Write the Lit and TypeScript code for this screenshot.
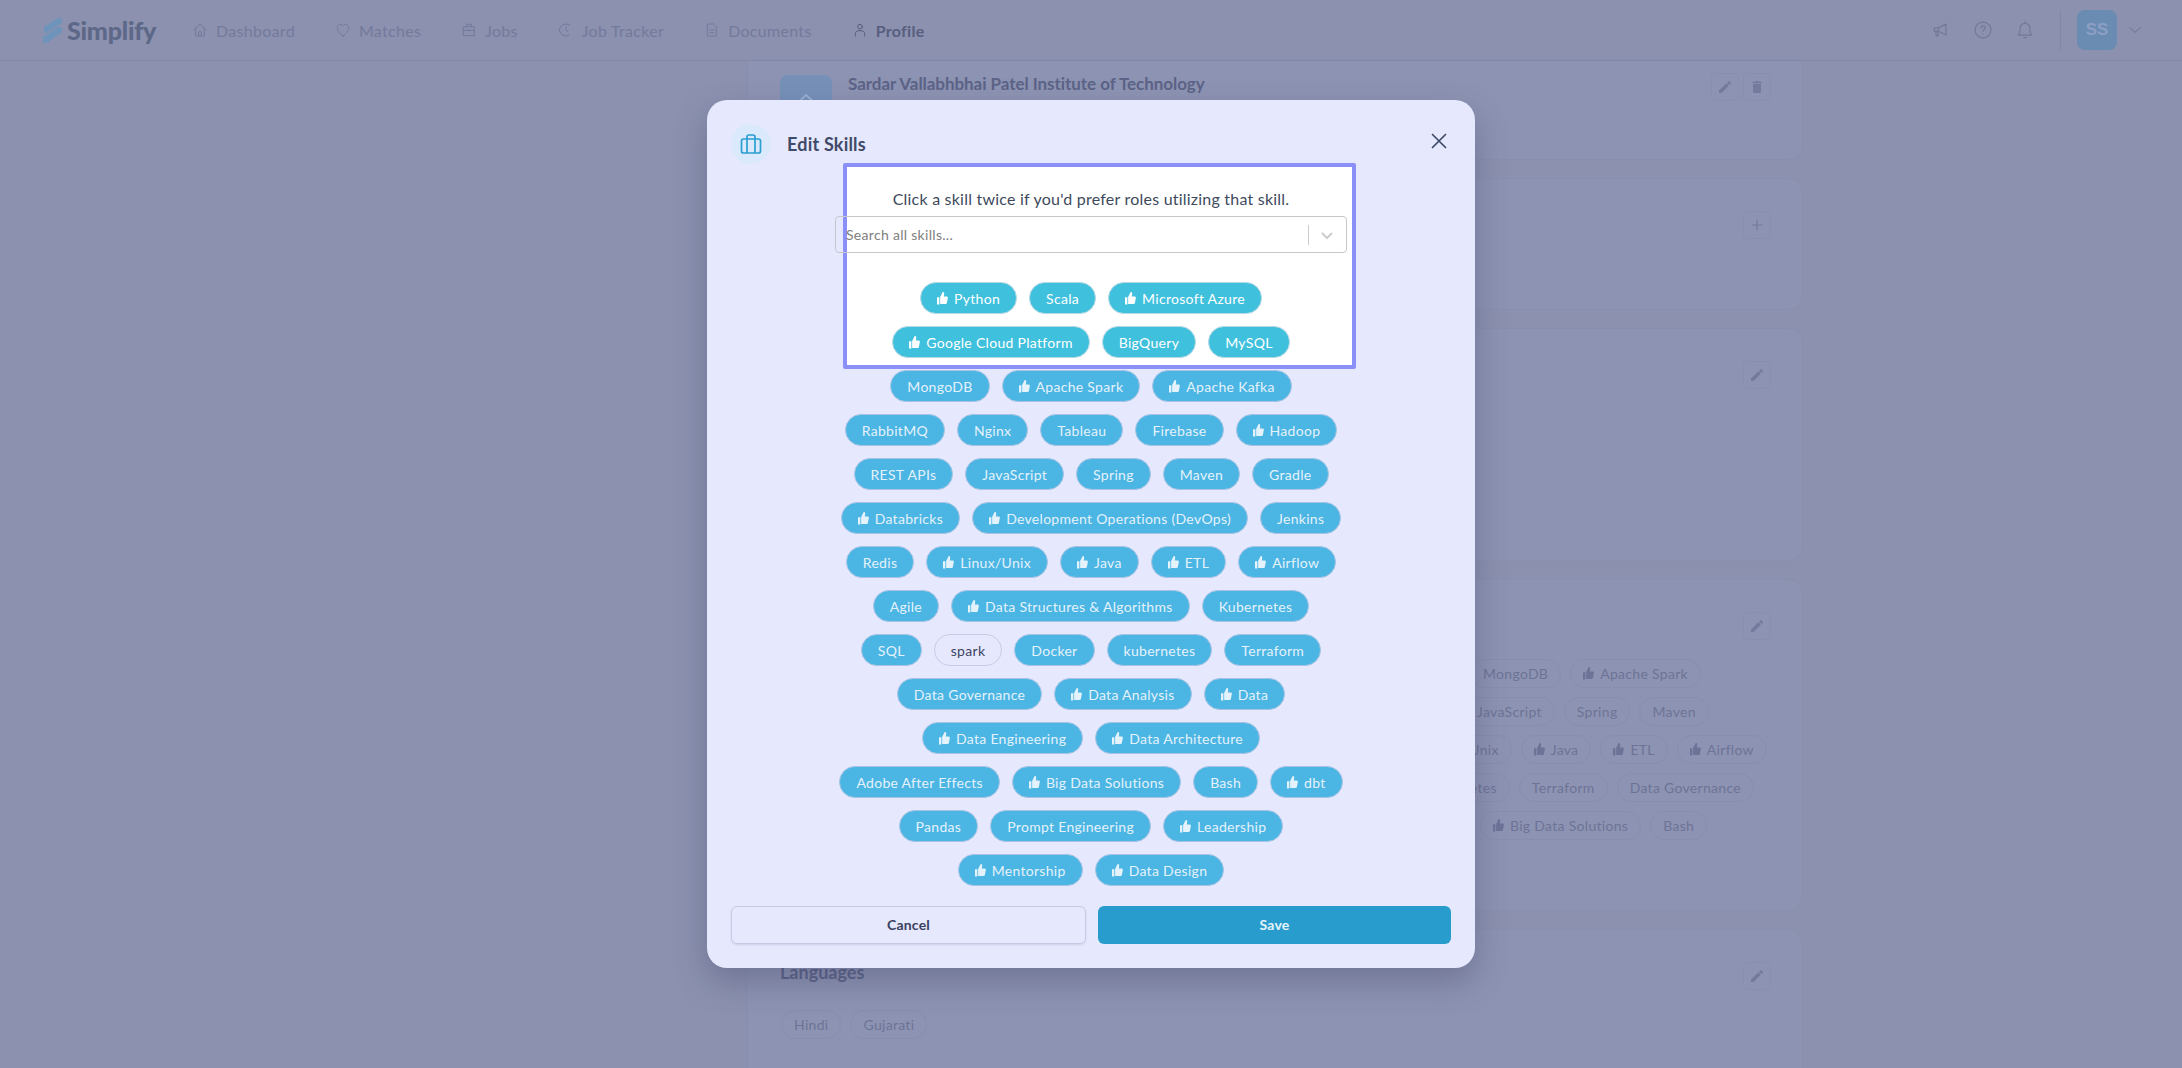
import { LitElement, html, css, svg } from 'lit';
import { customElement } from 'lit/decorators.js';

// "+" means the skill is preferred (thumb icon), "~" means not selected
const SPOT_ROWS = [
  ['+Python', 'Scala', '+Microsoft Azure'],
  ['+Google Cloud Platform', 'BigQuery', 'MySQL'],
];
const ROWS = [
  ['MongoDB', '+Apache Spark', '+Apache Kafka'],
  ['RabbitMQ', 'Nginx', 'Tableau', 'Firebase', '+Hadoop'],
  ['REST APIs', 'JavaScript', 'Spring', 'Maven', 'Gradle'],
  ['+Databricks', '+Development Operations (DevOps)', 'Jenkins'],
  ['Redis', '+Linux/Unix', '+Java', '+ETL', '+Airflow'],
  ['Agile', '+Data Structures & Algorithms', 'Kubernetes'],
  ['SQL', '~spark', 'Docker', 'kubernetes', 'Terraform'],
  ['Data Governance', '+Data Analysis', '+Data'],
  ['+Data Engineering', '+Data Architecture'],
  ['Adobe After Effects', '+Big Data Solutions', 'Bash', '+dbt'],
  ['Pandas', 'Prompt Engineering', '+Leadership'],
  ['+Mentorship', '+Data Design'],
];
// only the ends of these rows show beside the modal
const BG_ROWS = [
  { left: 689, skills: ['MongoDB', '+Apache Spark'] },
  { left: 683, skills: ['JavaScript', 'Spring', 'Maven'] },
  { left: 634, skills: ['Linux/Unix', '+Java', '+ETL', '+Airflow'] },
  { left: 631, skills: ['kubernetes', 'Terraform', 'Data Governance'] },
  { left: 699, skills: ['+Big Data Solutions', 'Bash'] },
];

const thumb = html`<svg class="thumb" viewBox="2 1 21 22" preserveAspectRatio="none" fill="currentColor">
  <path d="M2 10h4.500v12H2zM8 21.500V9.600l4.600-8.100c.3-.5 1-.7 1.600-.4 1.200.6 1.800 1.900 1.500 3.200L15 8.500h5.500c1.500 0 2.500 1.300 2.200 2.700l-1.800 8.500c-.3 1.100-1.200 1.800-2.300 1.800H9.500c-.8 0-1.500-.2-1.500-.5z" />
</svg>`;

const icon = (body: unknown, cls = 'nav-icon') => html`<svg
  class=${cls}
  viewBox="0 0 24 24"
  fill="none"
  stroke="currentColor"
  stroke-width="1.5"
  stroke-linecap="round"
  stroke-linejoin="round"
>${body}</svg>`;

const NAV = [
  { label: 'Dashboard', d: svg`<path d="M3 11.500 12 3l9 8.500M5.500 9.500V21h13V9.500M10 21v-6.500h4V21" />` },
  { label: 'Matches', d: svg`<path d="M12 21C6 16 3.500 12.500 3.500 8.500 3.500 5.500 5.800 3.500 8.300 3.500c1.600 0 2.900.8 3.700 2.200.8-1.400 2.100-2.200 3.700-2.200 2.500 0 4.800 2 4.800 5 0 4-2.500 7.500-8.500 12.500z" />` },
  { label: 'Jobs', d: svg`<path d="M4 7h16v13.500H4zM8.500 7V3.500h7V7M4 12.500h16M12 11.500v2" />` },
  { label: 'Job Tracker', d: svg`<path d="M16.500 4.500A9 9 0 1 0 16.500 19.500M12 7v5.500l3 2M16.500 4.500l1.500-1.500" />` },
  { label: 'Documents', d: svg`<path d="M5.500 3h9l4 4v14h-13zM9 12h6M9 16h6" />` },
];

@customElement('app-root')
export class AppRoot extends LitElement {
  static styles = css`
    :host {
      display: block;
      position: relative;
      width: 2182px;
      height: 1068px;
      overflow: hidden;
      background: #8b91af;
      font-family: Lato, 'Noto Sans', sans-serif;
      color: #6d7397;
    }
    .nav {
      display: flex;
      align-items: center;
      height: 60px;
      padding-left: 43px;
      border-bottom: 1px solid #8187a8;
    }
    .logo {
      display: flex;
      align-items: center;
      gap: 5px;
      width: 149px;
      font-size: 25px;
      font-weight: 900;
      color: #5d6787;
      letter-spacing: -0.2px;
    }
    .logo svg {
      width: 19px;
      height: 25px;
    }
    .links {
      display: flex;
      align-items: center;
      gap: 40px;
    }
    .link {
      display: flex;
      align-items: center;
      gap: 8px;
      font-size: 16px;
      color: #747a9c;
      letter-spacing: 0.3px;
    }
    .link.active {
      color: #585e7e;
      font-weight: 700;
    }
    .nav-icon {
      width: 16px;
      height: 16px;
    }
    .nav-right {
      margin-left: auto;
      display: flex;
      align-items: center;
      color: #737998;
    }
    .nav-right .tool {
      width: 20px;
      height: 20px;
      margin-right: 22px;
    }
    .sep {
      width: 1px;
      height: 40px;
      margin: 0 16px 0 3px;
      background: #8187a8;
    }
    .avatar {
      display: flex;
      align-items: center;
      justify-content: center;
      width: 40px;
      height: 40px;
      border-radius: 8px;
      background: #6a8bb2;
      color: #8d9fc3;
      font-size: 17px;
      font-weight: 700;
      font-family: 'Liberation Sans', sans-serif;
    }
    .caret {
      width: 16px;
      height: 16px;
      margin: 0 39px 0 10px;
      color: #6b7192;
    }
    .main {
      display: flex;
      flex-direction: column;
      gap: 18px;
      margin-left: 747px;
      width: 1056px;
    }
    .card {
      position: relative;
      box-sizing: border-box;
      padding: 32px 31px 0 33px;
      background: #8d93b2;
      border: 1px solid #8990ae;
      border-radius: 14px;
    }
    .card.first {
      height: 99px;
      padding-top: 12px;
      border-top: none;
      border-radius: 0 0 14px 14px;
    }
    .card.second {
      height: 132px;
    }
    .card.third {
      height: 233px;
    }
    .card.skills {
      height: 332px;
    }
    .card.last {
      height: 160px;
    }
    .actions {
      display: flex;
      justify-content: flex-end;
      gap: 4px;
    }
    .act {
      display: flex;
      align-items: center;
      justify-content: center;
      width: 28px;
      height: 28px;
      box-sizing: border-box;
      border: 1px solid #8990ae;
      border-radius: 5px;
      color: #747a9c;
    }
    .act svg {
      width: 16px;
      height: 16px;
    }
    .school {
      position: absolute;
      left: 32px;
      top: 11px;
      display: flex;
      gap: 16px;
    }
    .tile {
      display: flex;
      align-items: flex-end;
      justify-content: center;
      width: 52px;
      height: 52px;
      margin-top: 3px;
      border-radius: 8px;
      background: #7690b8;
      color: #9aaed0;
    }
    .tile svg {
      width: 30px;
      height: 30px;
      margin-bottom: 6px;
    }
    .school-name {
      font-size: 17px;
      font-weight: 700;
      color: #5c6387;
      line-height: 24px;
      letter-spacing: -0.05px;
    }
    .bg-rows {
      display: flex;
      flex-direction: column;
      gap: 9px;
      margin-top: 19px;
    }
    .bg-row {
      display: flex;
      gap: 9px;
    }
    .bg-chip {
      display: flex;
      align-items: center;
      gap: 6px;
      box-sizing: border-box;
      height: 29px;
      padding: 0 12px;
      border: 1px solid #888eac;
      border-radius: 15px;
      font-size: 14px;
      white-space: nowrap;
      letter-spacing: 0.3px;
    }
    .lang-title {
      position: absolute;
      left: 32px;
      top: 31px;
      font-size: 18px;
      font-weight: 700;
      color: #5c6387;
    }
    .langs {
      display: flex;
      gap: 9px;
      margin-top: 20px;
    }
    .modal {
      position: absolute;
      left: 707px;
      top: 100px;
      box-sizing: border-box;
      width: 768px;
      height: 868px;
      padding: 24px;
      display: flex;
      flex-direction: column;
      background: #e6e8fd;
      border-radius: 20px;
      box-shadow: 0 14px 32px rgba(60, 64, 100, 0.35);
    }
    .spot {
      position: absolute;
      left: 136px;
      top: 63px;
      box-sizing: border-box;
      width: 513px;
      height: 206px;
      background: #fff;
      border: 4px solid #8b90f8;
      border-radius: 2px;
    }
    .modal-head {
      position: relative;
      display: flex;
      align-items: center;
      gap: 16px;
      height: 40px;
    }
    .badge {
      display: flex;
      align-items: center;
      justify-content: center;
      width: 40px;
      height: 40px;
      border-radius: 50%;
      background: #dbe9fd;
      color: #2a9fd0;
    }
    .badge svg {
      width: 24px;
      height: 24px;
    }
    .modal-title {
      font-size: 18px;
      font-weight: 700;
      color: #3f4a68;
      letter-spacing: 0.2px;
    }
    .close {
      width: 20px;
      height: 20px;
      margin: -6px 2px 0 auto;
      color: #3f4a68;
    }
    .hint {
      position: relative;
      margin-top: 23px;
      height: 24px;
      line-height: 24px;
      text-align: center;
      font-size: 16px;
      color: #3e4a5c;
      letter-spacing: 0.22px;
    }
    .select {
      position: relative;
      display: flex;
      align-items: center;
      box-sizing: border-box;
      width: 512px;
      height: 37px;
      margin: 5px 0 0 104px;
      padding-left: 10px;
      border: 1px solid #c8c8cc;
      border-radius: 4px;
      font-size: 14px;
      letter-spacing: 0.3px;
      color: #808080;
    }
    .select .bar {
      width: 1px;
      height: 20px;
      margin-left: auto;
      background: #cccccc;
    }
    .select svg {
      width: 20px;
      height: 20px;
      margin: 0 9px 0 8px;
      color: #cccccc;
    }
    .chips {
      position: relative;
      display: flex;
      flex-direction: column;
      gap: 12px;
      margin-top: 29px;
    }
    .row {
      display: flex;
      justify-content: center;
      gap: 12px;
    }
    .chip {
      display: flex;
      align-items: center;
      gap: 6px;
      box-sizing: border-box;
      height: 32px;
      padding: 0 16px;
      border: 1px solid #a8c3e4;
      border-radius: 16px;
      background: #4bb5e3;
      color: #e4f2fc;
      font-size: 14px;
      white-space: nowrap;
      letter-spacing: 0.3px;
    }
    .chip.lit {
      background: #3fc0dd;
      border-color: #b5d8e4;
      color: #fff;
    }
    .chip.off {
      background: transparent;
      border-color: #c9cbe8;
      color: #3c4464;
    }
    .thumb {
      width: 11px;
      height: 13px;
    }
    .foot {
      position: relative;
      display: flex;
      gap: 12px;
      margin-top: auto;
    }
    .btn {
      flex: 1;
      display: flex;
      align-items: center;
      justify-content: center;
      box-sizing: border-box;
      height: 38px;
      padding-bottom: 2px;
      border-radius: 6px;
      font-size: 14px;
      font-weight: 700;
      letter-spacing: 0.2px;
    }
    .btn.cancel {
      border: 1px solid #c9c9e6;
      color: #3a4160;
      box-shadow: 0 1px 2px rgba(80, 80, 130, 0.15);
    }
    .btn.save {
      background: #289dcd;
      color: #e6f3fb;
    }
  `;

  private chip(raw: string, cls = 'chip') {
    const liked = raw.startsWith('+');
    const off = raw.startsWith('~');
    const name = liked || off ? raw.slice(1) : raw;
    return html`<div class="${cls} ${off ? 'off' : ''}">${liked ? thumb : ''}${name}</div>`;
  }

  private pencil() {
    return html`<div class="act">
      <svg viewBox="0 0 24 24" fill="currentColor">
        <path d="M3 17.250V21h3.750L17.810 9.940l-3.750-3.750L3 17.250zM20.710 7.040a1 1 0 0 0 0-1.410l-2.340-2.340a1 1 0 0 0-1.410 0l-1.830 1.830 3.750 3.750 1.830-1.830z" />
      </svg>
    </div>`;
  }

  render() {
    return html`
      <header class="nav">
        <div class="logo">
          <svg viewBox="0 0 19 25" fill="#6f94bb">
            <path d="M1 9 15 0h4v5L3 15H1zM0 19 15 9h4v5L4 25H0z" />
          </svg>
          Simplify
        </div>
        <nav class="links">
          ${NAV.map(n => html`<div class="link">${icon(n.d)}${n.label}</div>`)}
          <div class="link active">
            ${icon(svg`<circle cx="12" cy="7" r="3.500" /><path d="M5 21v-3.500C5 14.500 7.500 13 12 13s7 1.500 7 4.500V21" />`)}Profile
          </div>
        </nav>
        <div class="nav-right">
          ${icon(svg`<path d="M4 9.500h5L18 5v13l-9-4.500H4zM9 9.500v4M6 13.500V19h2.500v-5" />`, 'tool')}
          ${icon(svg`<circle cx="12" cy="12" r="9.500" /><path d="M9.500 9.500a2.500 2.500 0 1 1 3.800 2.100c-.9.600-1.300 1.100-1.300 2" /><path d="M12 16.800v.2" />`, 'tool')}
          ${icon(svg`<path d="M4 18c1.500-1.500 2-3 2-5.500V10a6 6 0 0 1 12 0v2.500c0 2.500.5 4 2 5.500zM12 2v2M10.500 21h3" />`, 'tool')}
          <div class="sep"></div>
          <div class="avatar">SS</div>
          ${icon(svg`<path d="M4 8.500l8 7 8-7" />`, 'caret')}
        </div>
      </header>

      <main class="main">
        <section class="card first">
          <div class="school">
            <div class="tile">
              <svg viewBox="0 0 30 30" fill="none" stroke="currentColor" stroke-width="2">
                <path d="M15 4 27 15 15 26 3 15zM11 15h8v5" />
              </svg>
            </div>
            <div class="school-name">Sardar Vallabhbhai Patel Institute of Technology</div>
          </div>
          <div class="actions">
            ${this.pencil()}
            <div class="act">
              <svg viewBox="0 0 24 24" fill="currentColor">
                <path d="M6 19a2 2 0 0 0 2 2h8a2 2 0 0 0 2-2V7H6v12zM19 4h-3.500l-1-1h-5l-1 1H5v2h14V4z" />
              </svg>
            </div>
          </div>
        </section>
        <section class="card second">
          <div class="actions">
            <div class="act">
              <svg viewBox="0 0 24 24" fill="none" stroke="currentColor" stroke-width="1.800">
                <path d="M12 4v16M4 12h16" />
              </svg>
            </div>
          </div>
        </section>
        <section class="card third">
          <div class="actions">${this.pencil()}</div>
        </section>
        <section class="card skills">
          <div class="actions">${this.pencil()}</div>
          <div class="bg-rows">
            ${BG_ROWS.map(r => html`<div class="bg-row" style="margin-left: ${r.left}px">
              ${r.skills.map(s => this.chip(s, 'bg-chip'))}
            </div>`)}
          </div>
        </section>
        <section class="card last">
          <div class="lang-title">Languages</div>
          <div class="actions">${this.pencil()}</div>
          <div class="langs">
            <div class="bg-chip">Hindi</div>
            <div class="bg-chip">Gujarati</div>
          </div>
        </section>
      </main>

      <div class="modal">
        <div class="spot"></div>
        <div class="modal-head">
          <div class="badge">
            <svg viewBox="0 0 24 24" fill="none" stroke="currentColor" stroke-width="1.700" stroke-linejoin="round">
              <rect x="2.500" y="7" width="19" height="14" rx="2" />
              <path d="M8 21V5a2 2 0 0 1 2-2h4a2 2 0 0 1 2 2v16" />
            </svg>
          </div>
          <div class="modal-title">Edit Skills</div>
          <svg class="close" viewBox="0 0 20 20" fill="none" stroke="currentColor" stroke-width="1.700" stroke-linecap="round">
            <path d="M3.500 3.500l13 13M16.500 3.500l-13 13" />
          </svg>
        </div>
        <div class="hint">Click a skill twice if you'd prefer roles utilizing that skill.</div>
        <div class="select">
          Search all skills...
          <span class="bar"></span>
          <svg viewBox="0 0 20 20" fill="none" stroke="currentColor" stroke-width="2">
            <path d="M5 8l5 5 5-5" />
          </svg>
        </div>
        <div class="chips">
          ${SPOT_ROWS.map(r => html`<div class="row">${r.map(s => this.chip(s, 'chip lit'))}</div>`)}
          ${ROWS.map(r => html`<div class="row">${r.map(s => this.chip(s))}</div>`)}
        </div>
        <div class="foot">
          <div class="btn cancel">Cancel</div>
          <div class="btn save">Save</div>
        </div>
      </div>
    `;
  }
}
